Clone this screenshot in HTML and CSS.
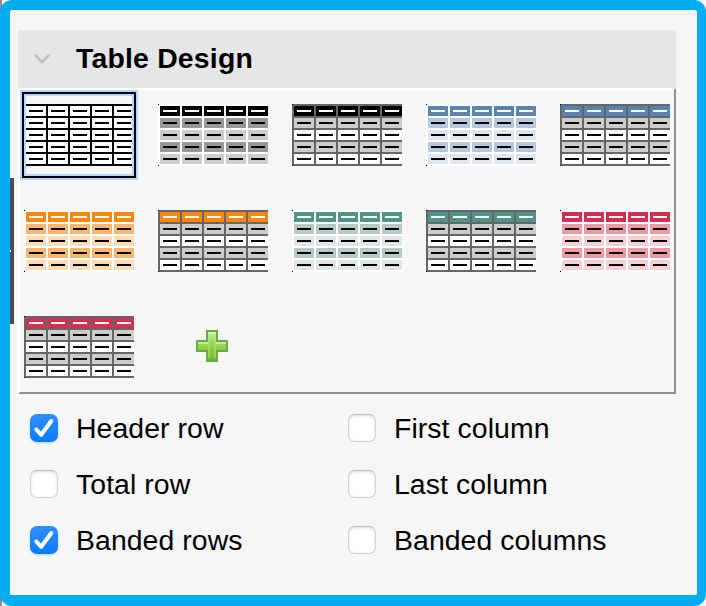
FILE: index.html
```html
<!DOCTYPE html>
<html lang="en">
<head>
<meta charset="utf-8">
<title>Table Design</title>
<link rel="stylesheet" href="styles.css">
</head>
<body>
<svg class="defs" width="0" height="0" aria-hidden="true">
  <defs>
    <path id="cells" d="M2 0h20v10H2zM24 0h20v10H24zM46 0h20v10H46zM68 0h20v10H68zM90 0h20v10H90z"/>
    <path id="marks" d="M5 4h14v2H5zM27 4h14v2H27zM49 4h14v2H49zM71 4h14v2H71zM93 4h14v2H93z"/>
    <symbol id="table" viewBox="0 0 110 62">
      <path class="line" d="M0 0h110v62H0z"/>
      <use href="#cells" y="2" class="head"/>
      <use href="#cells" y="14" class="odd"/>
      <use href="#cells" y="26" class="even"/>
      <use href="#cells" y="38" class="odd"/>
      <use href="#cells" y="50" class="even"/>
      <use href="#marks" y="2" class="headmark"/>
      <use href="#marks" y="14"/>
      <use href="#marks" y="26"/>
      <use href="#marks" y="38"/>
      <use href="#marks" y="50"/>
      <path d="M0 0h1v1H0zM0 61h1v1H0z"/>
    </symbol>
    <linearGradient id="leaf" x1="0" y1="0" x2="0" y2="1">
      <stop offset="0" stop-color="#c4ed93"/>
      <stop offset=".5" stop-color="#91d44d"/>
      <stop offset="1" stop-color="#69bd25"/>
    </linearGradient>
  </defs>
</svg>
<main class="panel">
  <span class="splitter"></span>
  <header class="title">
    <svg class="chevron" viewBox="0 0 18 12"><path d="M2.500 2.500 9 9l6.500-6.500"/></svg>
    <h1>Table Design</h1>
  </header>
  <section class="styles">
    <div class="item selected"><svg class="thumb plain"><use href="#table"/></svg></div>
    <div class="item"><svg class="thumb black"><use href="#table"/></svg></div>
    <div class="item"><svg class="thumb black grid"><use href="#table"/></svg></div>
    <div class="item"><svg class="thumb blue"><use href="#table"/></svg></div>
    <div class="item"><svg class="thumb blue grid"><use href="#table"/></svg></div>
    <div class="item"><svg class="thumb orange"><use href="#table"/></svg></div>
    <div class="item"><svg class="thumb orange grid"><use href="#table"/></svg></div>
    <div class="item"><svg class="thumb teal"><use href="#table"/></svg></div>
    <div class="item"><svg class="thumb teal grid"><use href="#table"/></svg></div>
    <div class="item"><svg class="thumb red"><use href="#table"/></svg></div>
    <div class="item"><svg class="thumb red grid"><use href="#table"/></svg></div>
    <div class="item">
      <svg class="plus" viewBox="0 0 32 32" shape-rendering="crispEdges">
        <path fill="#6ca94c" d="M10 0h12v10h10v12H22v10H10V22H0V10h10z"/>
        <path fill="url(#leaf)" d="M12 2h8v10h10v8H20v10h-8V20H2v-8h10z"/>
        <path fill="#d4f5b0" fill-opacity=".65" d="M12 2h8v2h-8zM2 12h10v2H2zM20 12h10v2H20z"/>
        <path fill="#b5e67e" fill-opacity=".5" d="M12 4h2v24h-2zM18 4h2v24h-2z"/>
      </svg>
    </div>
  </section>
  <section class="options">
    <label class="option"><span class="box checked"><svg viewBox="0 0 28 28"><path d="m6.300 15.500 4.900 5.300L21.300 7"/></svg></span><span>Header row</span></label>
    <label class="option"><span class="box"></span><span>First column</span></label>
    <label class="option"><span class="box"></span><span>Total row</span></label>
    <label class="option"><span class="box"></span><span>Last column</span></label>
    <label class="option"><span class="box checked"><svg viewBox="0 0 28 28"><path d="m6.300 15.500 4.900 5.300L21.300 7"/></svg></span><span>Banded rows</span></label>
    <label class="option"><span class="box"></span><span>Banded columns</span></label>
  </section>
</main>
</body>
</html>
```
FILE: styles.css
```css
* { box-sizing: border-box; }
body {
  margin: 0;
  background: linear-gradient(90deg, #8c8c90 2px, #f5f5f5 2px);
  font-family: "Liberation Sans", Arial, sans-serif;
  color: #000;
}
.defs { position: absolute; }
.panel {
  position: relative;
  width: 706px;
  height: 606px;
  padding: 20px 21px 0 8px;
  border: solid #00aeef;
  border-width: 10px 9px 11px 10px;
  border-radius: 12px;
  background: #f6f6f6;
}
.splitter {
  position: absolute;
  left: 0;
  top: 168px;
  width: 4px;
  height: 146px;
  background: #4d4d52;
}
.splitter::after {
  content: "";
  position: absolute;
  left: 0;
  top: 72px;
  width: 1px;
  height: 2px;
  background: #fff;
}
.title {
  display: flex;
  align-items: center;
  gap: 25px;
  height: 58px;
  padding-left: 15px;
  background: #e6e6e6;
}
.chevron { width: 18px; height: 12px; }
.chevron path {
  fill: none;
  stroke: #c0c0c0;
  stroke-width: 2.5;
  stroke-linecap: round;
  stroke-linejoin: round;
}
h1 {
  margin: 0;
  padding-bottom: 2px;
  font-size: 28.4px;
  line-height: 32px;
  letter-spacing: .2px;
}
.styles {
  display: grid;
  grid-template-columns: repeat(5, 134px);
  grid-auto-rows: 106px;
  width: 658px;
  height: 306px;
  border: 2px solid #fff;
  border-right-color: #8e8e93;
  border-bottom-color: #8e8e93;
}
.item { position: relative; width: 118px; height: 90px; padding: 14px 4px; }
.thumb { display: block; width: 110px; height: 62px; shape-rendering: crispEdges; }
.selected::after {
  content: "";
  position: absolute;
  inset: 0;
  border: 2px solid #b3d7ff;
  box-shadow: inset 0 0 0 2px #000, inset 0 0 0 4px #b3d7ff;
}
.line { fill: var(--line, #fff); }
.head { fill: var(--head); }
.odd { fill: var(--odd); }
.even { fill: var(--even); }
.headmark { fill: var(--mark, #fff); }
.plain { --line: #000; --head: #fff; --odd: #fff; --even: #fff; --mark: #000; }
.black { --head: #000; --odd: #999; --even: #ccc; }
.blue { --head: #5983b0; --odd: #b4c7dc; --even: #dee6ef; }
.orange { --head: #ff860d; --odd: #ffb66c; --even: #ffdbb6; }
.teal { --head: #50938a; --odd: #b3cac7; --even: #dee7e5; }
.red { --head: #d62e4e; --odd: #ec9ba4; --even: #f7d1d5; }
.grid { --line: #666; --odd: #ccc; --even: #fff; }
.plus { display: block; width: 32px; height: 32px; margin: 14px 0 0 38px; }
.options {
  display: grid;
  grid-template-columns: 318px 1fr;
  grid-auto-rows: 56px;
  padding: 6px 0 0 12px;
}
.option {
  display: flex;
  align-items: center;
  gap: 18px;
  font-size: 28.4px;
  line-height: 32px;
  letter-spacing: .08px;
  white-space: nowrap;
}
.box {
  width: 28px;
  height: 28px;
  border: 1px solid #cfcfcf;
  border-top-color: #bcbcbc;
  border-radius: 7px;
  background: #fff;
  box-shadow: inset 0 1px 3px rgba(0, 0, 0, .14);
}
.checked {
  border: 0;
  background: linear-gradient(#2f90ff, #0a7aff);
  box-shadow: 0 1px 2px rgba(0, 100, 255, .3);
}
.checked svg { display: block; width: 28px; height: 28px; }
.checked path {
  fill: none;
  stroke: #fff;
  stroke-width: 4;
  stroke-linecap: round;
  stroke-linejoin: round;
}
```
